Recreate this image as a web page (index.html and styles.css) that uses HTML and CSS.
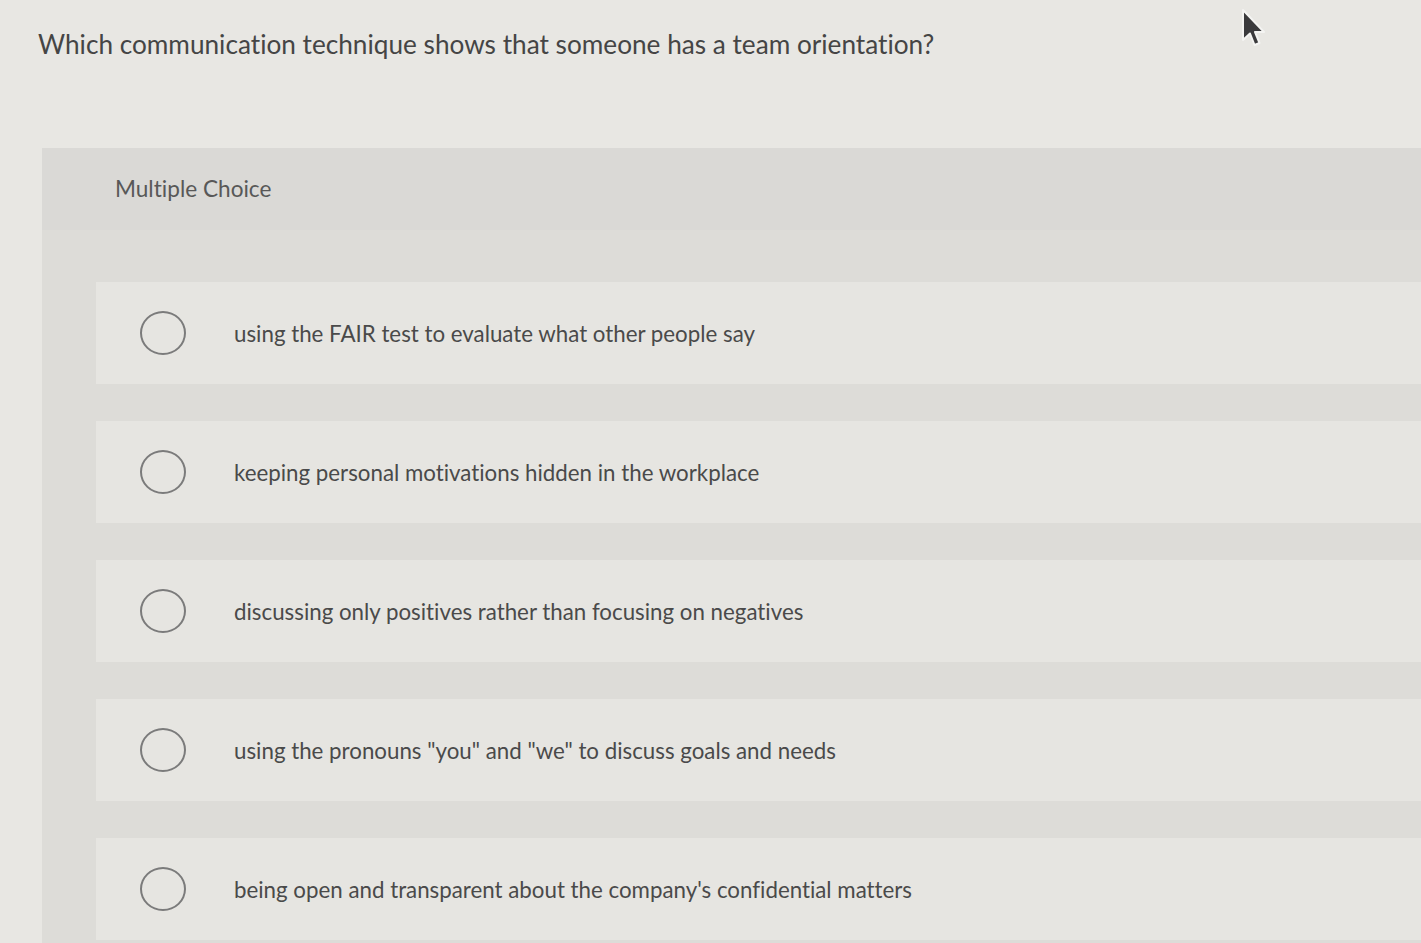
FILE: index.html
```html
<!DOCTYPE html>
<html lang="en">
<head>
<meta charset="utf-8">
<title>Multiple Choice</title>
<link rel="stylesheet" href="styles.css">
</head>
<body>
<div class="page">
  <h1 class="question">Which communication technique shows that someone has a team orientation?</h1>
  <section class="panel">
    <div class="panel-head">Multiple Choice</div>
    <div class="options">
      <label class="option"><span class="radio"></span><span class="opt-text">using the FAIR test to evaluate what other people say</span></label>
      <label class="option"><span class="radio"></span><span class="opt-text">keeping personal motivations hidden in the workplace</span></label>
      <label class="option"><span class="radio"></span><span class="opt-text">discussing only positives rather than focusing on negatives</span></label>
      <label class="option"><span class="radio"></span><span class="opt-text">using the pronouns "you" and "we" to discuss goals and needs</span></label>
      <label class="option"><span class="radio"></span><span class="opt-text">being open and transparent about the company's confidential matters</span></label>
    </div>
  </section>
  <svg class="cursor" width="26" height="40" viewBox="0 0 26 40" aria-hidden="true">
    <path d="M3 2 L3 32 L10 25.5 L14.5 37 L19.5 35 L15 24 L24 24 Z" fill="#3a3a3c" stroke="#f4f4f2" stroke-width="2" stroke-linejoin="round"/>
  </svg>
</div>
</body>
</html>
```
FILE: styles.css
```css
* { box-sizing: border-box; }
html, body {
  margin: 0;
  padding: 0;
  height: 100%;
  overflow: hidden;
}
body {
  background: #e8e7e3;
  font-family: Lato, "Open Sans", "Liberation Sans", sans-serif;
  font-variant-ligatures: none;
  color: #474747;
}
.page {
  position: relative;
  padding: 27px 0 0 38px;
  height: 943px;
}
.question {
  margin: 0;
  font-size: 26.2px;
  font-weight: 400;
  line-height: 34px;
  color: #454545;
}
.panel {
  margin: 87px 0 0 4px;
  background: #dddcd8;
  padding-bottom: 20px;
}
.panel-head {
  height: 82px;
  padding: 26px 0 0 73px;
  font-size: 22.6px;
  line-height: 30px;
  color: #585858;
  background: #dad9d6;
}
.options {
  display: flex;
  flex-direction: column;
  gap: 37px;
  padding: 52px 0 0 54px;
}
.option {
  display: flex;
  align-items: center;
  height: 102px;
  padding-left: 44px;
  background: #e6e5e1;
}
.radio {
  flex: none;
  width: 46px;
  height: 44px;
  border: 2px solid #7b7b7b;
  border-radius: 50%;
  margin-right: 48px;
}
.opt-text {
  font-size: 22.3px;
  color: #4a4a4a;
}
.cursor {
  position: absolute;
  left: 1240px;
  top: 8px;
}
```
